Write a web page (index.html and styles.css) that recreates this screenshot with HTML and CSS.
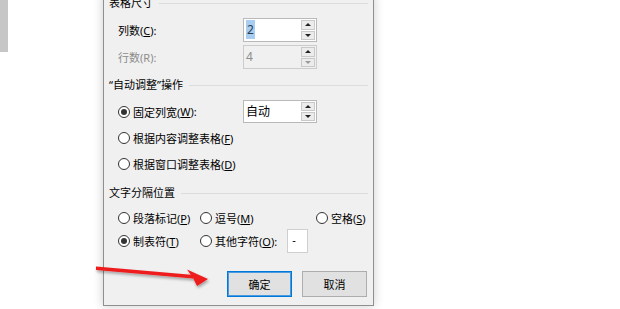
FILE: index.html
```html
<!DOCTYPE html>
<html lang="zh-CN">
<head>
    <meta charset="UTF-8">
    <meta name="viewport" content="width=device-width, initial-scale=1.0">
    <title>将文字转换成表格</title>
    <link rel="stylesheet" href="styles.css">
</head>
<body>
    <div class="page">
        <div class="side-bar"></div>
        <div class="dialog">
            <div class="group-head"><span>表格尺寸</span></div>
            <div class="group-body">
                <div class="field-row first">
                    <span class="field-label">列数(<u>C</u>):</span>
                    <div class="spin">
                        <span class="spin-value"><span class="sel">2</span></span>
                        <span class="spin-btns"><span class="spin-btn up"></span><span class="spin-btn down"></span></span>
                    </div>
                </div>
                <div class="field-row second disabled">
                    <span class="field-label">行数(R):</span>
                    <div class="spin">
                        <span class="spin-value">4</span>
                        <span class="spin-btns"><span class="spin-btn up"></span><span class="spin-btn down"></span></span>
                    </div>
                </div>
            </div>

            <div class="group-head autofit"><span>“自动调整”操作</span></div>
            <div class="group-body">
                <div class="field-row fixed">
                    <span class="field-label"><span class="radio on"></span>固定列宽(<u>W</u>):</span>
                    <div class="spin">
                        <span class="spin-value">自动</span>
                        <span class="spin-btns"><span class="spin-btn up"></span><span class="spin-btn down"></span></span>
                    </div>
                </div>
                <div class="radio-row content"><span class="radio"></span>根据内容调整表格(<u>F</u>)</div>
                <div class="radio-row window"><span class="radio"></span>根据窗口调整表格(<u>D</u>)</div>
            </div>

            <div class="group-head separator"><span>文字分隔位置</span></div>
            <div class="group-body">
                <div class="sep-grid">
                    <div class="sep-item"><span class="radio"></span>段落标记(<u>P</u>)</div>
                    <div class="sep-item"><span class="radio"></span>逗号(<u>M</u>)</div>
                    <div class="sep-item"><span class="radio"></span>空格(<u>S</u>)</div>
                    <div class="sep-item"><span class="radio on"></span>制表符(<u>T</u>)</div>
                    <div class="sep-item"><span class="radio"></span>其他字符(<u>O</u>):<span class="char-box">-</span></div>
                    <div class="sep-item"></div>
                </div>
            </div>

            <div class="actions">
                <button class="btn btn-default">确定</button>
                <button class="btn">取消</button>
            </div>
        </div>

        <svg class="arrow" width="620" height="309" viewBox="0 0 620 309">
            <defs>
                <filter id="arrowShadow" x="-10%" y="-50%" width="120%" height="200%">
                    <feDropShadow dx="1" dy="2" stdDeviation="1.5" flood-color="#000" flood-opacity="0.35"/>
                </filter>
            </defs>
            <g filter="url(#arrowShadow)">
                <path d="M96 266.5 L194 275 L193 278.5 L96 270 Z" fill="#ee1c1c"/>
                <path d="M187 269.5 L208 279 L197 286 L193 278 Z" fill="#ee1c1c"/>
            </g>
        </svg>
    </div>
</body>
</html>
```

FILE: styles.css
```css
body {
    margin: 0;
    background-color: #ffffff;
    font-family: "Noto Sans", "Noto Sans CJK SC", sans-serif;
    font-size: 11px;
    color: #000000;
    overflow: hidden;
}
.page {
    position: relative;
    display: flex;
    align-items: flex-start;
    height: 309px;
}
.side-bar {
    width: 8px;
    height: 52px;
    background-color: #c6c6c6;
}
.dialog {
    box-sizing: border-box;
    width: 271px;
    height: 312px;
    margin-top: -6px;
    margin-left: 95px;
    padding: 0 5px;
    background-color: #f0f0f0;
    border: 1px solid #8f8f8f;
    box-shadow: 0 0 10px rgba(0,0,0,0.2);
}
.group-head {
    display: flex;
    align-items: center;
    height: 16px;
    line-height: 16px;
    white-space: nowrap;
}
.group-head::after {
    content: "";
    flex: 1;
    margin-left: 6px;
    border-top: 1px solid #dcdcdc;
}
.group-head.autofit {
    margin-top: 8px;
}
.group-head.separator {
    margin-top: 11px;
}
.group-body {
    padding-left: 9px;
}
.field-row {
    display: flex;
    align-items: center;
    height: 24px;
}
.field-row.first {
    margin-top: 7px;
}
.field-row.second {
    margin-top: 3px;
}
.field-row.fixed {
    margin-top: 7px;
    height: 23px;
}
.field-label {
    display: flex;
    align-items: center;
    width: 125px;
    white-space: nowrap;
}
.disabled .field-label {
    color: #8c8c8c;
}
.spin {
    box-sizing: border-box;
    display: flex;
    width: 74px;
    height: 100%;
    padding: 1px;
    background-color: #ffffff;
    border: 1px solid #b9b9b9;
}
.disabled .spin {
    background-color: #f0f0f0;
    border-color: #cccccc;
}
.spin-value {
    flex: 1;
    padding-left: 1px;
    font-size: 12px;
    line-height: 19px;
}
.disabled .spin-value {
    color: #8c8c8c;
}
.sel {
    display: inline-block;
    padding: 0 1px;
    background-color: #a9cdf0;
    color: #2b3c55;
}
.spin-btns {
    display: flex;
    flex-direction: column;
    gap: 1px;
    width: 14px;
}
.spin-btn {
    flex: 1;
    display: flex;
    align-items: center;
    justify-content: center;
    background-color: #ececec;
    border: 1px solid #c9c9c9;
}
.spin-btn.up::after {
    content: "";
    border-left: 3px solid transparent;
    border-right: 3px solid transparent;
    border-bottom: 3px solid #222222;
}
.spin-btn.down::after {
    content: "";
    border-left: 3px solid transparent;
    border-right: 3px solid transparent;
    border-top: 3px solid #222222;
}
.disabled .spin-btn.down::after {
    border-top-color: #9a9a9a;
}
.radio {
    box-sizing: border-box;
    display: inline-flex;
    align-items: center;
    justify-content: center;
    flex: none;
    width: 12px;
    height: 12px;
    margin-right: 3px;
    background-color: #ffffff;
    border: 1px solid #333333;
    border-radius: 50%;
}
.radio.on::after {
    content: "";
    width: 6px;
    height: 6px;
    border-radius: 50%;
    background-color: #333333;
}
.radio-row {
    display: flex;
    align-items: center;
    height: 20px;
    white-space: nowrap;
}
.radio-row.content {
    margin-top: 5px;
}
.radio-row.window {
    margin-top: 6px;
}
.sep-grid {
    display: grid;
    grid-template-columns: 82px 116px 1fr;
    grid-template-rows: 20px 24px;
    row-gap: 1px;
    margin-top: 7px;
}
.sep-item {
    display: flex;
    align-items: center;
    white-space: nowrap;
}
.char-box {
    box-sizing: border-box;
    width: 21px;
    height: 24px;
    margin-left: 10px;
    padding-left: 4px;
    line-height: 20px;
    background-color: #ffffff;
    border: 1px solid #cfcfcf;
}
.actions {
    display: flex;
    justify-content: flex-end;
    gap: 10px;
    margin-top: 18px;
    padding-right: 1px;
}
.btn {
    box-sizing: border-box;
    width: 65px;
    height: 26px;
    padding: 0;
    font: inherit;
    color: #000000;
    background-color: #e1e1e1;
    border: 1px solid #adadad;
}
.btn-default {
    border-color: #0078d7;
    box-shadow: inset 0 0 0 1px #4a9ae0;
}
.arrow {
    position: absolute;
    left: 0;
    top: 0;
    pointer-events: none;
}
```
